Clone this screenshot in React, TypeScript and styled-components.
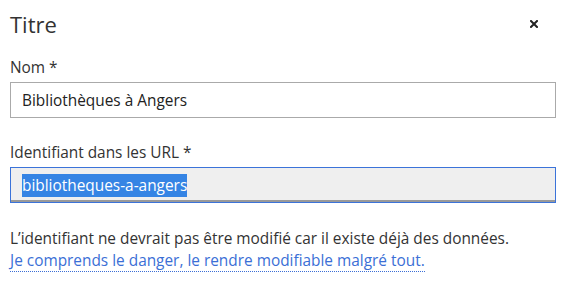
import React from "react";
import styled, { createGlobalStyle } from "styled-components";

const Global = createGlobalStyle`
  html, body { margin: 0; padding: 0; background: #fff; }
  body { font-family: "Open Sans", "Noto Sans", sans-serif; color: #333; }
  ::selection { background: #3584e4; color: #fff; }
`;

const Dialog = styled.div`
  width: 566px;
  height: 292px;
  box-sizing: border-box;
  padding: 7px 10px 0 10px;
  display: flex;
  flex-direction: column;
`;

const Header = styled.div`
  display: flex;
  align-items: center;
  justify-content: space-between;
  height: 34px;
`;

const Title = styled.h1`
  margin: 0;
  font-size: 22px;
  font-weight: 400;
  color: #333;
  line-height: 30px;
`;

const CloseButton = styled.button`
  border: none;
  background: none;
  padding: 0;
  width: 16px;
  height: 16px;
  margin-right: 14px;
  display: flex;
  align-items: center;
  justify-content: center;
  cursor: pointer;
`;

const Field = styled.div<{ $gap: number }>`
  display: flex;
  flex-direction: column;
  margin-top: ${(p) => p.$gap}px;
`;

const Label = styled.label`
  font-size: 15.4px;
  line-height: 20px;
  color: #333;
  margin-bottom: 4px;
`;

const Input = styled.div<{ $focused?: boolean }>`
  box-sizing: border-box;
  height: 36px;
  width: 546px;
  display: flex;
  align-items: center;
  padding: 0 11px;
  font-size: 15.4px;
  color: #222;
  background: ${(p) => (p.$focused ? "#efefef" : "#fff")};
  border: 1px solid ${(p) => (p.$focused ? "#3b73d9" : "#aaa")};
  box-shadow: ${(p) => (p.$focused ? "inset 0 -2px 0 #999" : "none")};
`;

const Selected = styled.span`
  background: #3584e4;
  color: #fff;
  padding: 1px 0;
`;

const Help = styled.p`
  margin: 25px 0 0 0;
  font-size: 15.4px;
  line-height: 22px;
  color: #333;
`;

const DangerLink = styled.a`
  color: #3b6fd6;
  text-decoration: none;
  border-bottom: 1px dotted #3b6fd6;
  cursor: pointer;
`;

export default function App() {
  return (
    <>
      <Global />
      <Dialog>
        <Header>
          <Title>Titre</Title>
          <CloseButton aria-label="Fermer">
            <svg width="8" height="8" viewBox="0 0 8 8">
              <path d="M1 1 L7 7 M7 1 L1 7" stroke="#222" strokeWidth="2" strokeLinecap="square" />
            </svg>
          </CloseButton>
        </Header>
        <Field $gap={17}>
          <Label>Nom *</Label>
          <Input>Bibliothèques à Angers</Input>
        </Field>
        <Field $gap={25}>
          <Label>Identifiant dans les URL *</Label>
          <Input $focused>
            <Selected>bibliotheques-a-angers</Selected>
          </Input>
        </Field>
        <Help>
          L’identifiant ne devrait pas être modifié car il existe déjà des données.
          <br />
          <DangerLink>Je comprends le danger, le rendre modifiable malgré tout.</DangerLink>
        </Help>
      </Dialog>
    </>
  );
}
